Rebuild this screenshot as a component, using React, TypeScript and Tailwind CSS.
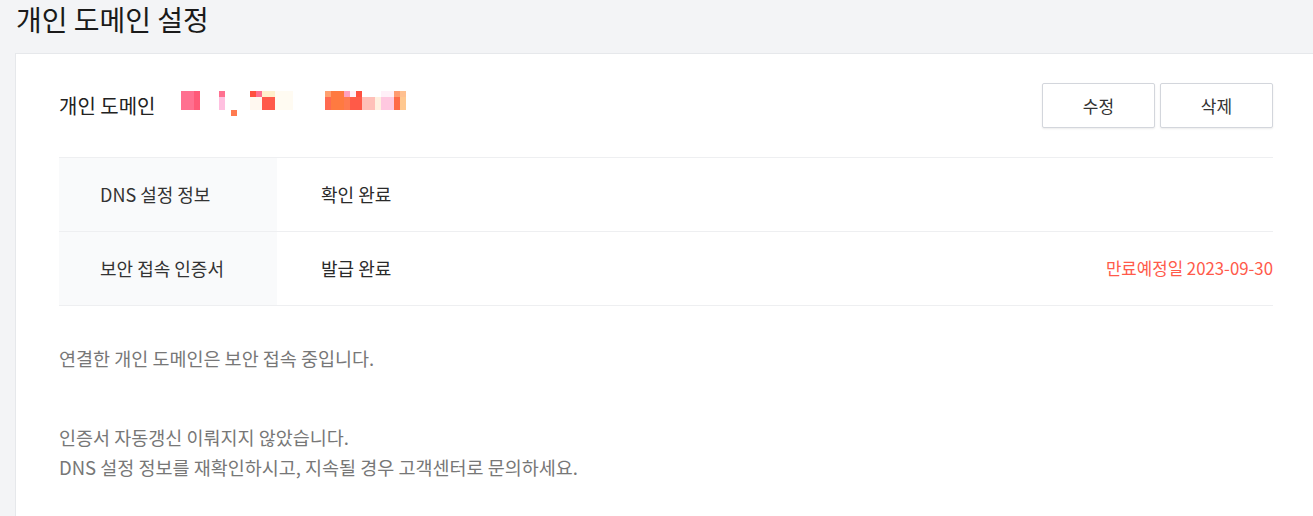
import React from "react";

const font = { fontFamily: '"Noto Sans CJK KR", "Noto Sans", sans-serif' };

// blurred domain name, drawn as mosaic blocks
const mosaic: [number, number, number, number, string][] = [
  [0, 0, 13, 19, "#ff7090"],
  [13, 0, 6, 19, "#ff5a78"],
  [38, 0, 6, 6, "#ff7090"],
  [38, 6, 6, 13, "#ffc0e0"],
  [50, 19, 6, 6, "#ff7a50"],
  [69, 0, 6, 6, "#ff5040"],
  [75, 0, 6, 6, "#ff7090"],
  [81, 0, 13, 6, "#fff0cc"],
  [69, 6, 12, 13, "#fff8f0"],
  [81, 6, 13, 13, "#ff5a4a"],
  [94, 0, 18, 19, "#fffbf2"],
  [144, 0, 6, 6, "#ffa070"],
  [150, 0, 13, 6, "#ff7a40"],
  [163, 0, 6, 6, "#ffa0c0"],
  [169, 0, 6, 6, "#fff0f8"],
  [175, 0, 6, 6, "#ff5040"],
  [144, 6, 6, 13, "#ff6a50"],
  [150, 6, 13, 13, "#ff7a40"],
  [163, 6, 6, 13, "#ff7a50"],
  [169, 6, 12, 13, "#ff5a48"],
  [181, 6, 13, 13, "#ffc0b8"],
  [194, 6, 6, 13, "#fff0e0"],
  [200, 0, 13, 6, "#fff0f8"],
  [200, 6, 13, 13, "#ffc8e0"],
  [213, 0, 6, 6, "#ff9a70"],
  [213, 6, 6, 13, "#ff6a48"],
  [219, 0, 6, 6, "#ffc090"],
  [219, 6, 6, 13, "#ffc890"],
];

const DomainMosaic = () => (
  <svg width="225" height="25" viewBox="0 0 225 25" className="block">
    {mosaic.map(([x, y, w, h, c], i) => (
      <rect key={i} x={x} y={y} width={w} height={h} fill={c} />
    ))}
  </svg>
);

const rows = [
  { label: "DNS 설정 정보", value: "확인 완료", extra: "" },
  { label: "보안 접속 인증서", value: "발급 완료", extra: "만료예정일 2023-09-30" },
];

export default function App() {
  return (
    <div className="min-h-[516px] bg-[#f3f4f6] pl-[15px] overflow-hidden" style={font}>
      <h1 className="h-[53px] pl-[1px] text-[28px] leading-[38px] font-normal text-[#1a1a1a]">
        개인 도메인 설정
      </h1>
      <div className="w-[1302px] min-h-[470px] bg-white border border-[#e6e8eb] px-[43px] pt-[29px]">
        <div className="flex items-center justify-between mb-[29px]">
          <div className="flex items-center">
            <span className="text-[20px] text-[#222] w-[122px]">개인 도메인</span>
            <div className="pb-[4px]">
              <DomainMosaic />
            </div>
          </div>
          <div className="flex gap-[5px]">
            <button className="w-[113px] h-[45px] bg-white border border-[#d3d6dc] rounded-[2px] shadow-[0_1px_2px_rgba(0,0,0,0.08)] text-[17px] text-[#333]">
              수정
            </button>
            <button className="w-[113px] h-[45px] bg-white border border-[#d3d6dc] rounded-[2px] shadow-[0_1px_2px_rgba(0,0,0,0.08)] text-[17px] text-[#333]">
              삭제
            </button>
          </div>
        </div>

        <div className="border-b border-[#eeeff1]">
          {rows.map((r) => (
            <div key={r.label} className="flex h-[74px] border-t border-[#eeeff1]">
              <div className="w-[218px] bg-[#f9fafb] flex items-center pl-[41px] text-[18px] text-[#333]">
                {r.label}
              </div>
              <div className="flex-1 flex items-center justify-between pl-[44px] text-[18px] text-[#2a2a2a]">
                <span>{r.value}</span>
                <span className="text-[16.8px] text-[#ff5a4a]">{r.extra}</span>
              </div>
            </div>
          ))}
        </div>

        <div className="mt-[37px] text-[18.5px] leading-[30px] text-[#777]">
          <p>연결한 개인 도메인은 보안 접속 중입니다.</p>
          <p className="mt-[49px]">인증서 자동갱신 이뤄지지 않았습니다.</p>
          <p>DNS 설정 정보를 재확인하시고, 지속될 경우 고객센터로 문의하세요.</p>
        </div>
      </div>
    </div>
  );
}
